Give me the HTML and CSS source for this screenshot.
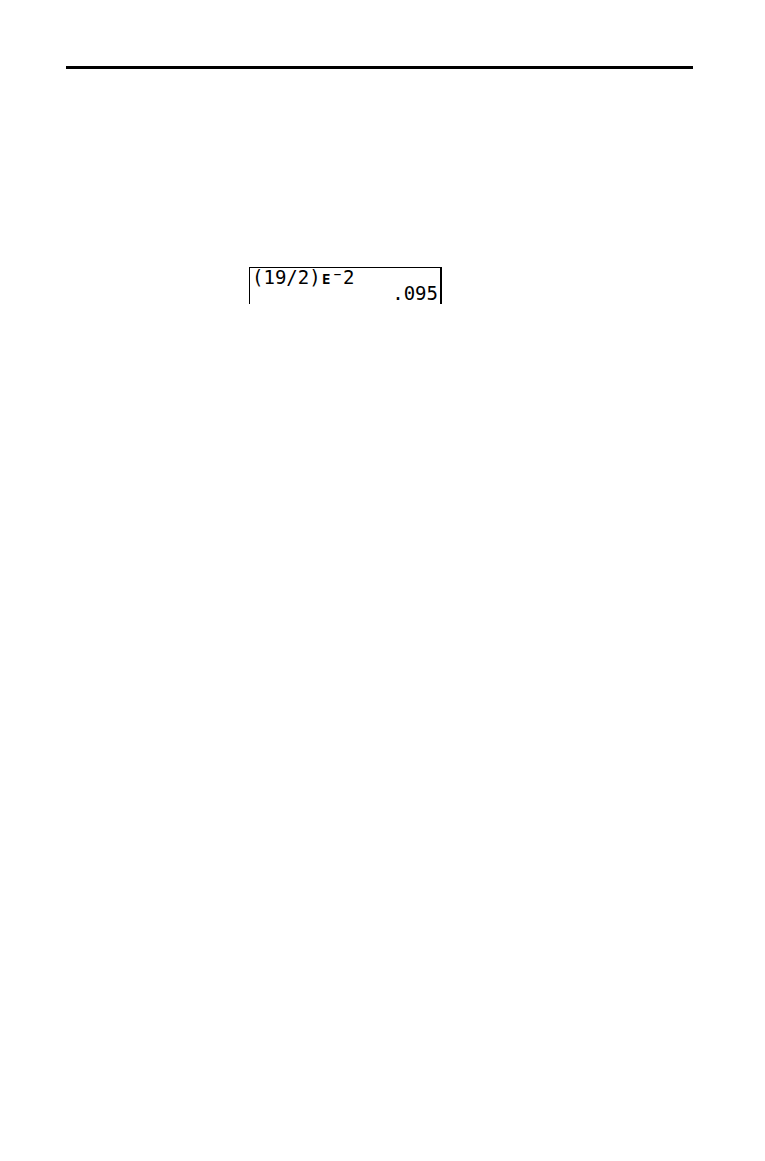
FILE: index.html
```html
<!DOCTYPE html>
<html lang="en">
<head>
    <meta charset="UTF-8">
    <meta name="viewport" content="width=device-width, initial-scale=1.0">
    <title>(19/2)E-2</title>
    <link rel="stylesheet" href="styles.css">
</head>
<body>

    <main class="page">
        <hr class="rule">
        <div class="screen">
            <p class="entry">(19/2)<span class="exponent">E</span><span class="negative">⁻</span>2</p>
            <p class="result">.095</p>
        </div>
    </main>

</body>
</html>
```
FILE: styles.css
```css
@charset "utf-8";

* {
    box-sizing: border-box;
    margin: 0;
    padding: 0;
}

body {
    background: #fff;
    color: #000;
}

.page {
    padding: 66px 72px 66px 66px;
}

.rule {
    border: 0;
    border-top: 3px solid #000;
}

/* calculator screen, open at the bottom */
.screen {
    width: 193px;
    margin-top: 198px;
    margin-left: 183px;
    padding: 1px 2px 3px 2px;
    border: solid #000;
    border-width: 1px 2px 0 1px;
    font-family: "DejaVu Sans Mono", monospace;
    font-size: 19px;
    line-height: 16px;
    white-space: nowrap;
}

.exponent {
    display: inline-block;
    width: 11px;
    font-size: 14px;
    font-weight: bold;
    line-height: 10px;
    text-align: center;
}

.negative {
    font-weight: bold;
}

.result {
    text-align: right;
}
```
